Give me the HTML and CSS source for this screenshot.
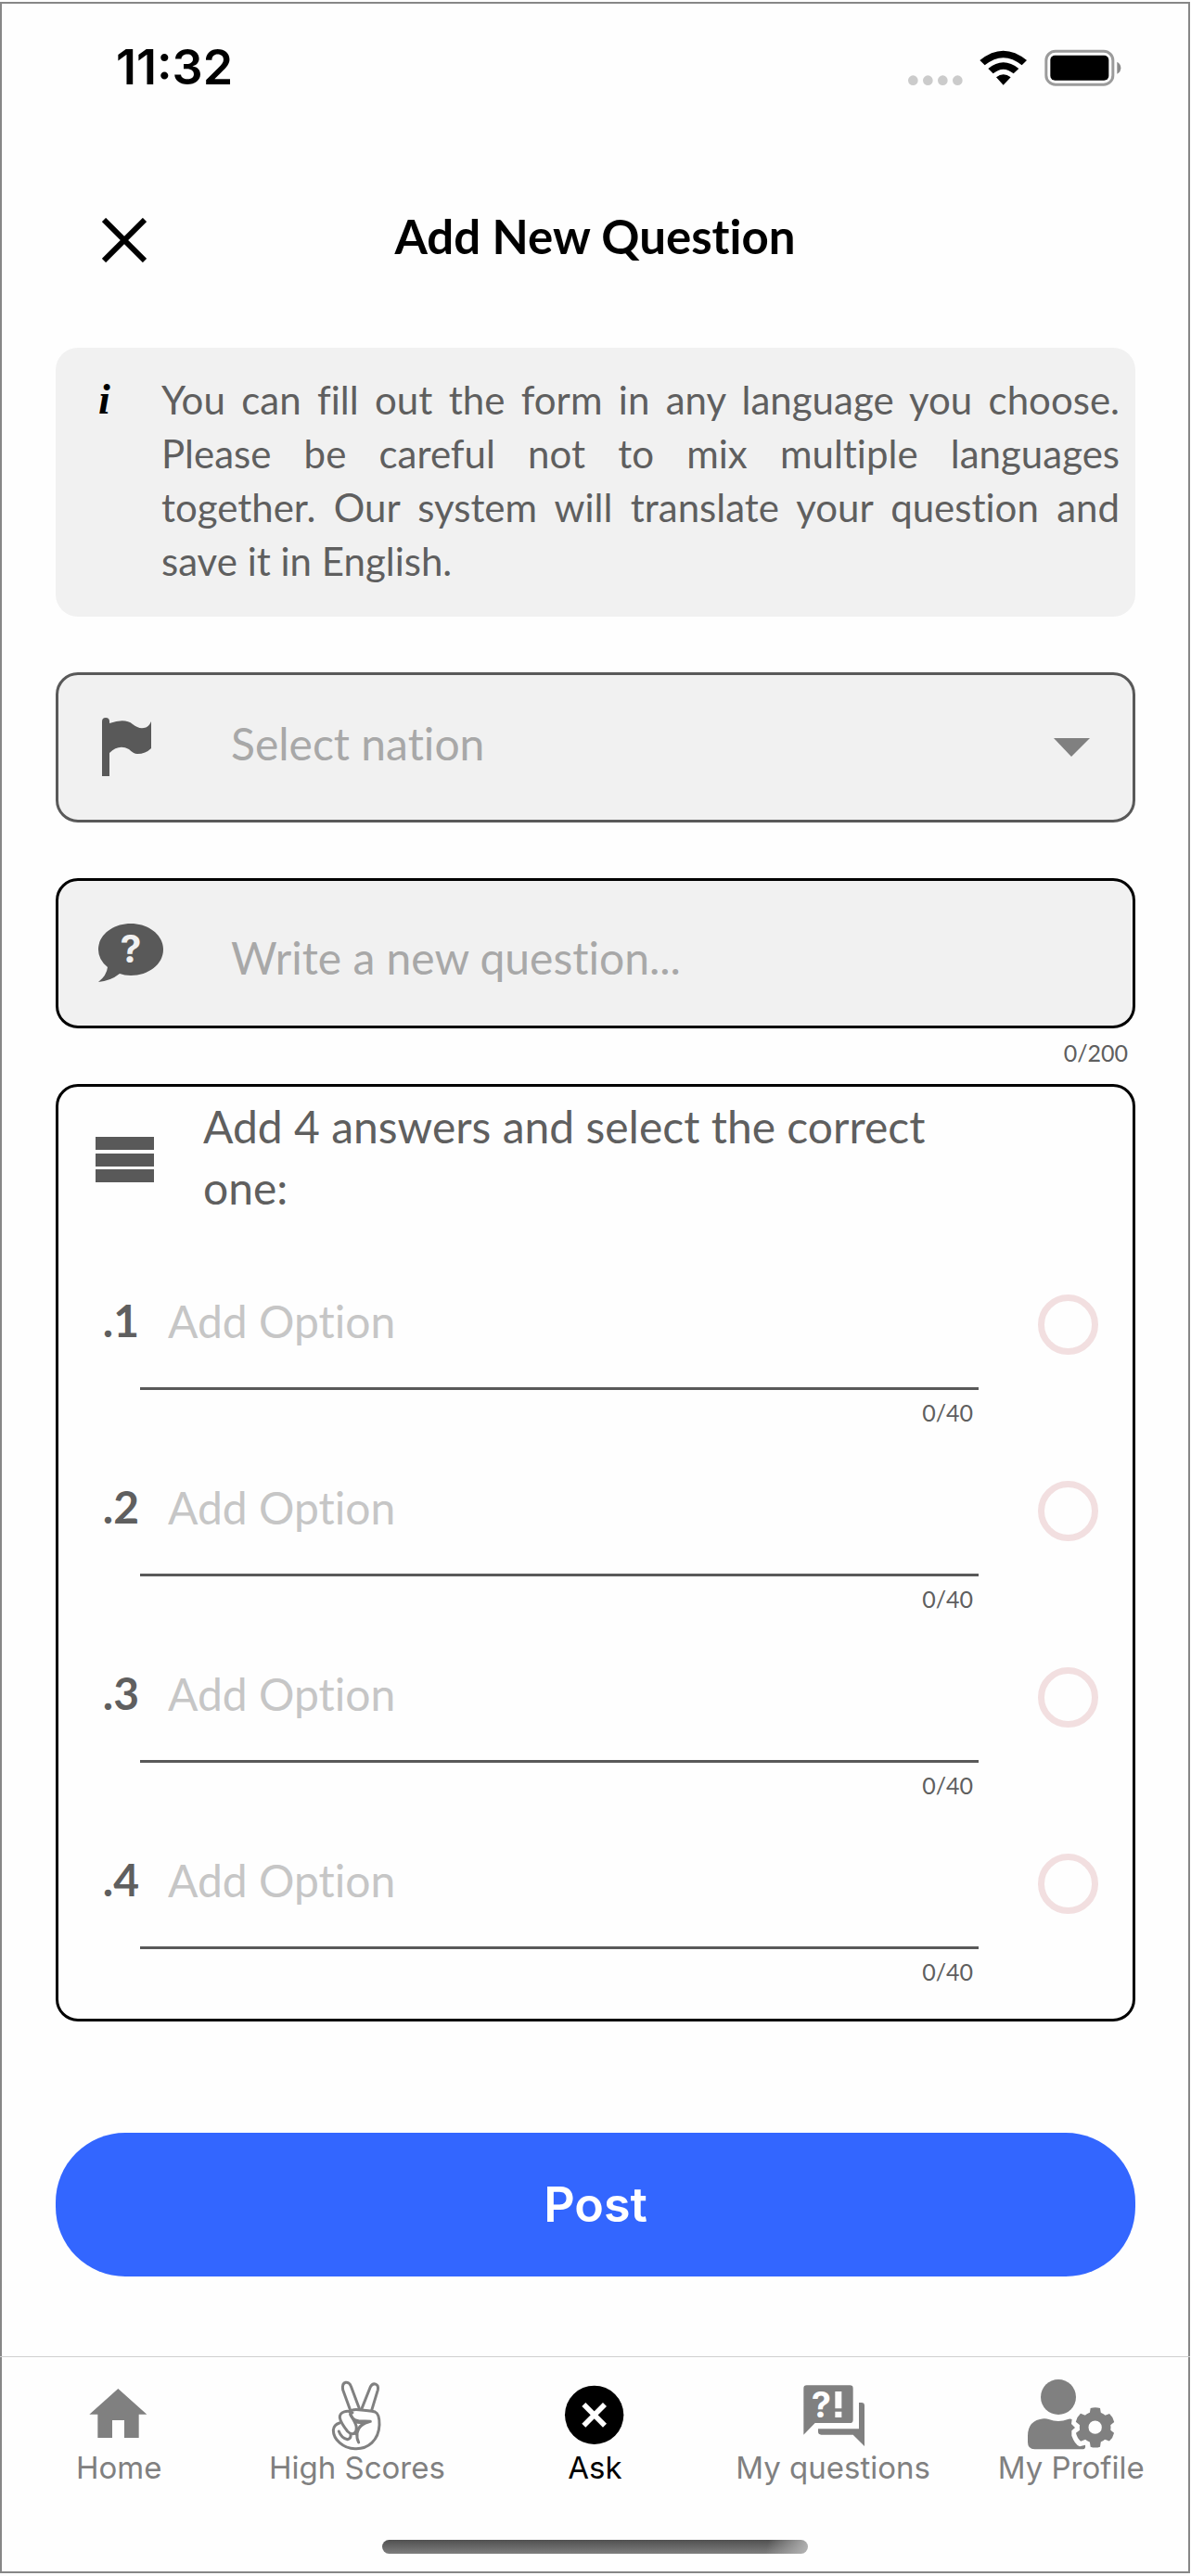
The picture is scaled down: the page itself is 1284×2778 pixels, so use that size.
FILE: index.html
```html
<!DOCTYPE html>
<html lang="en">
<head>
<meta charset="utf-8">
<meta name="viewport" content="width=device-width, initial-scale=1">
<title>Add New Question</title>
<link rel="stylesheet" href="styles.css">
</head>
<body>
<div class="screen">
  <div class="status">
    <span class="time">11:32</span>
    <svg class="status-icons" viewBox="116 67 690 120" aria-hidden="true">
      <g fill="#cbcbcb"><circle cx="132" cy="168" r="16"/><circle cx="180" cy="168" r="16"/><circle cx="228" cy="168" r="16"/><circle cx="276" cy="168" r="16"/></g>
      <path d="M348 103Q424 41 500 103L484 119Q424 70 364 119ZM375 130Q424 90 474 130L457 146Q424 118 391 146ZM401 158Q424 139 448 158L424 183Z"/>
      <rect x="562.500" y="73.500" width="216" height="108" rx="30" fill="none" stroke="#9b9b9b" stroke-width="9"/>
      <rect x="576" y="87" width="189" height="81" rx="15"/>
      <path d="M792 108Q804 114 804 128T792 147Z" fill="#8a8a8a"/>
    </svg>
  </div>

  <header class="header">
    <button class="close" type="button" aria-label="Close">
      <svg viewBox="0 0 48 48" aria-hidden="true"><path d="M2 2 46 46M46 2 2 46" stroke="#000" stroke-width="6"/></svg>
    </button>
    <h1 class="title">Add New Question</h1>
  </header>

  <form class="form">
    <div class="info">
      <span class="info-icon" aria-hidden="true">i</span>
      <p class="info-text">You can fill out the form in any language you choose. Please be careful not to mix multiple languages together. Our system will translate your question and save it in English.</p>
    </div>

    <div class="field field-nation">
      <label class="field-icon" for="nation" aria-label="Nation">
        <svg viewBox="0 0 76 64" aria-hidden="true"><path fill="#595959" d="M7 4Q7 0 11 0T15 4V6Q32 0 40 7Q46 12 52 11Q57 11 60 4V33Q54 39 45 39Q41 39 36 34Q25 28 15 38V63H7Z"/></svg>
      </label>
      <select class="control" id="nation"><option>Select nation</option></select>
      <svg class="arrow" viewBox="0 0 39 20" aria-hidden="true"><path fill="#808080" d="M0 0H39L19 20Z"/></svg>
    </div>

    <div class="field field-question">
      <label class="field-icon" for="question" aria-label="Question">
        <svg viewBox="0 0 76 64" aria-hidden="true"><path fill="#595959" d="M38 0C57 0 73 12 73 28S57 56 38 56Q31 56 26 54Q16 62 3 63Q12 56 13 47Q3 39 3 28C3 12 19 0 38 0Z"/><text class="glyph" x="38" y="42" font-size="41" fill="#f1f1f1" text-anchor="middle">?</text></svg>
      </label>
      <input class="control" id="question" type="text" maxlength="200" placeholder="Write a new question...">
    </div>
    <div class="counter counter-question">0/200</div>

    <fieldset class="answers">
      <div class="answers-head">
        <svg class="bars" viewBox="0 0 64 58" aria-hidden="true"><path fill="#595959" d="M0 7H63V21H0ZM0 25H63V39H0ZM0 42H63V56H0Z"/></svg>
        <p class="answers-title">Add 4 answers and select the correct one:</p>
      </div>
      <div class="answer">
        <label class="number" for="a1">.1</label>
        <div class="option"><input class="option-input" id="a1" type="text" maxlength="40" placeholder="Add Option"><div class="counter">0/40</div></div>
        <input class="radio" type="radio" name="correct" aria-label="Answer 1 is correct">
      </div>
      <div class="answer">
        <label class="number" for="a2">.2</label>
        <div class="option"><input class="option-input" id="a2" type="text" maxlength="40" placeholder="Add Option"><div class="counter">0/40</div></div>
        <input class="radio" type="radio" name="correct" aria-label="Answer 2 is correct">
      </div>
      <div class="answer">
        <label class="number" for="a3">.3</label>
        <div class="option"><input class="option-input" id="a3" type="text" maxlength="40" placeholder="Add Option"><div class="counter">0/40</div></div>
        <input class="radio" type="radio" name="correct" aria-label="Answer 3 is correct">
      </div>
      <div class="answer">
        <label class="number" for="a4">.4</label>
        <div class="option"><input class="option-input" id="a4" type="text" maxlength="40" placeholder="Add Option"><div class="counter">0/40</div></div>
        <input class="radio" type="radio" name="correct" aria-label="Answer 4 is correct">
      </div>
    </fieldset>

    <button class="post" type="submit">Post</button>
  </form>

  <nav class="tabs">
    <a class="tab" href="#home">
      <svg viewBox="234 102 300 240" aria-hidden="true"><path d="M382 138 475 221H449V297H402V240H363V297H316V221H289Z"/></svg>
      Home
    </a>
    <a class="tab" href="#scores">
      <svg class="line-icon" viewBox="1005 102 300 240" aria-hidden="true">
        <path d="M1133 208 1109 142C1104 112 1129 112 1135 130L1163 205"/>
        <path d="M1169 205 1198 132C1207 116 1226 122 1222 142L1202 208"/>
        <path d="M1132 212Q1138 204 1160 206Q1195 208 1213 213Q1228 220 1227 255C1225 305 1190 334 1148 332C1110 332 1078 302 1078 272Q1080 254 1098 249"/>
        <path d="M1132 212Q1136 240 1160 242L1198 244Q1160 252 1155 282Q1153 300 1160 312"/>
        <path d="M1140 216C1125 206 1098 212 1099 232Q1102 249 1124 276Q1138 290 1148 280Q1158 268 1148 248Q1140 232 1133 222"/>
        <path d="M1096 276Q1104 298 1124 302Q1136 300 1134 286M1148 246 1172 248M1150 284Q1160 262 1172 254"/>
      </svg>
      High Scores
    </a>
    <a class="tab tab-active" href="#ask" aria-current="page">
      <svg viewBox="336 102 300 240" aria-hidden="true"><circle cx="485" cy="223" r="95"/><path d="M451 189 519 257M519 189 451 257" stroke="#fff" stroke-width="17"/></svg>
      Ask
    </a>
    <a class="tab" href="#questions">
      <svg viewBox="204 102 300 240" aria-hidden="true"><path d="M269 127H409Q419 127 419 137V239Q419 249 409 249H296L259 287V137Q259 127 269 127ZM438 183H446Q456 183 456 193V324L419 287H316Q306 287 306 277V268H438Z"/><text class="glyph" x="284" y="231" font-size="114" fill="#fefefe">?</text><path fill="#fefefe" d="M361 147H382V202H361ZM361 212H382V231H361Z"/></svg>
      My questions
    </a>
    <a class="tab" href="#profile">
      <svg viewBox="975 102 300 240" aria-hidden="true">
        <circle cx="1083" cy="165" r="57"/>
        <path d="M984 311V291Q984 240 1035 235Q1044 234 1052 237Q1083 249 1114 237Q1122 234 1127 238L1125 252 1137 264 1126 274V290Q1136 318 1152 325L1170 320Q1172 333 1163 334H1006Q984 333 984 311Z"/>
        <circle cx="1202" cy="263" r="36" fill="none" stroke="currentColor" stroke-width="29"/>
        <path id="tooth" d="M1184 220 1187 201Q1202 196 1218 201L1221 220ZM1184 306 1187 326Q1202 331 1218 326L1221 306Z"/>
        <use href="#tooth" transform="rotate(60 1202 263)"/>
        <use href="#tooth" transform="rotate(120 1202 263)"/>
      </svg>
      My Profile
    </a>
  </nav>
  <div class="home-indicator"></div>
</div>
</body>
</html>
```
FILE: styles.css
```css
* {
  box-sizing: border-box;
}

body {
  margin: 0;
  padding: 2px 1px 3px 0;
  background: #fff;
  font-family: Lato, "Liberation Sans", sans-serif;
  font-weight: 400;
  font-variant-ligatures: no-common-ligatures;
  color: #5f5f5f;
}

.screen {
  background: #fefefe;
  box-shadow: inset 0 0 0 2px #878787;
  padding-bottom: 21px;
}

/* Status bar */
.status {
  display: flex;
  align-items: center;
  justify-content: space-between;
  height: 141px;
  padding: 0 74px 0 125px;
}

.time {
  font: 600 52px/60px Inter, sans-serif;
  color: #000;
}

.status-icons {
  width: 230px;
  height: 40px;
}

/* Title bar */
.header {
  display: grid;
  grid-template-columns: 48px 1fr 48px;
  align-items: center;
  height: 232px;
  padding: 0 110px;
}

.close {
  display: block;
  width: 48px;
  height: 48px;
  padding: 0;
  border: 0;
  background: none;
}

.close svg {
  display: block;
}

.title {
  margin: 0;
  padding-bottom: 8px;
  font-size: 51px;
  line-height: 60px;
  font-weight: 700;
  text-align: center;
  color: #000;
}

/* Form */
.form {
  padding: 0 59px 0 60px;
}

.info {
  display: grid;
  grid-template-columns: 114px 1fr;
  padding: 27px 17px 31px 0;
  border-radius: 24px;
  background: #f1f1f1;
}

.info-icon {
  padding-left: 46px;
  font: italic 700 46px/58px "Liberation Serif", serif;
  color: #000;
}

.info-text {
  margin: 0;
  font-size: 42px;
  line-height: 58px;
  text-align: justify;
}

.field {
  display: flex;
  align-items: center;
  margin-top: 60px;
  height: 162px;
  padding: 0 46px 0 40px;
  border: 3px solid #595959;
  border-radius: 24px;
  background: #f1f1f1;
}

.field-question {
  border-color: #000;
}

.field-icon {
  flex: none;
  width: 76px;
  height: 64px;
}

.field-icon svg {
  display: block;
}

.glyph {
  font-family: Inter, sans-serif;
  font-weight: 700;
}

.control {
  flex: 1;
  min-width: 0;
  height: 100%;
  margin: 0;
  padding: 0 0 8px 70px;
  border: 0;
  outline: 0;
  appearance: none;
  background: none;
  font: inherit;
  font-variant-ligatures: inherit;
  font-size: 48px;
  line-height: 60px;
  color: #a8a8a8;
}

.field-question .control {
  padding: 8px 0 0 70px;
}

.control::placeholder {
  color: #a8a8a8;
  opacity: 1;
}

.arrow {
  flex: none;
  width: 39px;
  height: 20px;
}

.counter {
  padding-right: 6px;
  font-size: 25px;
  line-height: 48px;
  text-align: right;
}

.counter-question {
  padding: 2px 8px 10px 0;
}

.answers {
  margin: 0;
  padding: 10px 37px 27px 40px;
  border: 3px solid #000;
  border-radius: 24px;
}

.answers-head {
  display: flex;
  align-items: center;
  gap: 52px;
  padding-bottom: 32px;
}

.bars {
  flex: none;
  width: 64px;
  height: 58px;
}

.answers-title {
  margin: 0;
  max-width: 850px;
  font-size: 48px;
  line-height: 66px;
}

.answer {
  display: grid;
  grid-template-columns: 48px 1fr 129px;
  align-items: start;
  padding-top: 30px;
}

.number {
  padding-right: 1px;
  font-size: 48px;
  font-weight: 700;
  line-height: 96px;
  text-align: right;
}

.option-input {
  display: block;
  width: 100%;
  height: 123px;
  padding: 0 0 24px 30px;
  border: 0;
  border-bottom: 3px solid #595959;
  border-radius: 0;
  outline: 0;
  background: none;
  font: inherit;
  font-variant-ligatures: inherit;
  font-size: 48px;
  line-height: 60px;
  color: #595959;
}

.option-input::placeholder {
  color: #c6c6c6;
  opacity: 1;
}

.radio {
  appearance: none;
  justify-self: end;
  width: 65px;
  height: 65px;
  margin: 20px 0 0;
  border: 7px solid #f2dfe0;
  border-radius: 50%;
}

.post {
  display: block;
  width: 100%;
  height: 155px;
  margin: 120px 0 86px;
  border: 0;
  border-radius: 75px;
  background: #36f;
  font: 600 52px/60px Inter, sans-serif;
  color: #fff;
}

/* Bottom tabs */
.tabs {
  display: grid;
  grid-template-columns: repeat(5, 1fr);
  padding: 22px 0 61px;
  border-top: 1px solid #d0d0d0;
}

.tab {
  display: flex;
  flex-direction: column;
  align-items: center;
  font: 400 33px/34px Inter, sans-serif;
  text-decoration: none;
  color: #808080;
}

.tab svg {
  width: 100px;
  height: 80px;
  fill: currentColor;
}

.tab .line-icon {
  fill: none;
  stroke: currentColor;
  stroke-width: 9;
  stroke-linecap: round;
  stroke-linejoin: round;
}

.tab-active {
  color: #000;
}

.home-indicator {
  width: 459px;
  max-width: 60%;
  height: 15px;
  margin: 0 auto;
  border-radius: 8px;
  background: linear-gradient(105deg, transparent 90%, #b4b4b4 100%), linear-gradient(#505050, #7e7e7e);
}
```
